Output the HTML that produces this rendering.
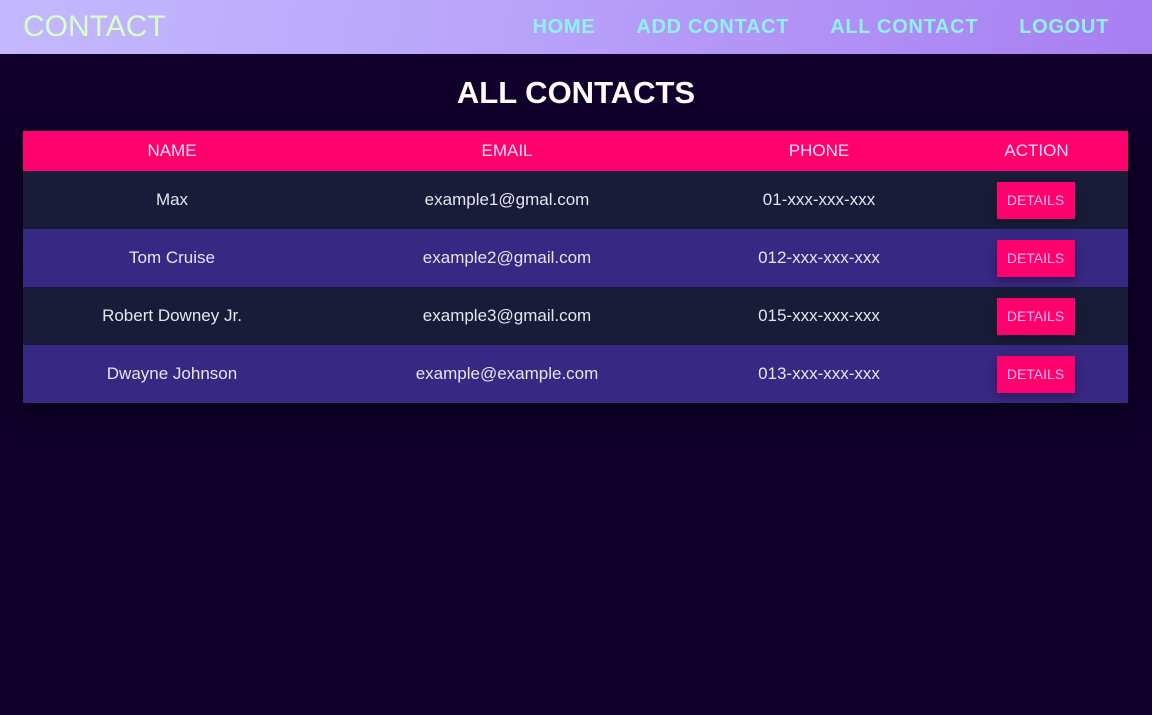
<!DOCTYPE html>
<html><head><style>
*{margin:0;padding:0;box-sizing:border-box}
body{width:1152px;height:715px;background:#10002b;font-family:"Liberation Sans",sans-serif;overflow:hidden}
.nav{height:54px;background:linear-gradient(100deg,#c3b8fd 0%,#b9a6fb 40%,#a87ef1 100%);position:relative}
.logo{position:absolute;left:23px;top:10px;font-size:30px;color:#d8ffc6}
.links{position:absolute;right:0;top:16px;display:flex}
.links span{color:#8ef2f6;font-weight:bold;font-size:20px;margin-right:41px;letter-spacing:0.7px}
.links span:last-child{margin-right:43px}
h1{color:#fff;text-align:center;font-size:31px;margin-top:21px;height:56px}
table{margin-left:23px;width:1105px;border-collapse:collapse;color:#e8e4f0;font-size:17px;box-shadow:0 8px 20px rgba(0,0,0,.5)}
th{background:#ff006e;height:40px;font-weight:normal;color:#fde}
td{height:58px;text-align:center}
tr.a td{background:#181c38}
tr.b td{background:#372883}
.btn{display:inline-block;background:#ff006e;color:#fbd;font-size:14px;width:78px;height:37px;line-height:37px;box-shadow:0 4px 10px rgba(0,0,0,.3);margin-left:-2px}
</style></head><body>
<div class="nav"><div class="logo">CONTACT</div>
<div class="links"><span>HOME</span><span>ADD CONTACT</span><span>ALL CONTACT</span><span>LOGOUT</span></div></div>
<h1>ALL CONTACTS</h1>
<table>
<colgroup><col style="width:298px"><col style="width:372px"><col style="width:252px"><col style="width:183px"></colgroup>
<tr><th>NAME</th><th>EMAIL</th><th>PHONE</th><th>ACTION</th></tr>
<tr class="a"><td>Max</td><td>example1@gmal.com</td><td>01-xxx-xxx-xxx</td><td><span class="btn">DETAILS</span></td></tr>
<tr class="b"><td>Tom Cruise</td><td>example2@gmail.com</td><td>012-xxx-xxx-xxx</td><td><span class="btn">DETAILS</span></td></tr>
<tr class="a"><td>Robert Downey Jr.</td><td>example3@gmail.com</td><td>015-xxx-xxx-xxx</td><td><span class="btn">DETAILS</span></td></tr>
<tr class="b"><td>Dwayne Johnson</td><td>example@example.com</td><td>013-xxx-xxx-xxx</td><td><span class="btn">DETAILS</span></td></tr>
</table>
</body></html>
